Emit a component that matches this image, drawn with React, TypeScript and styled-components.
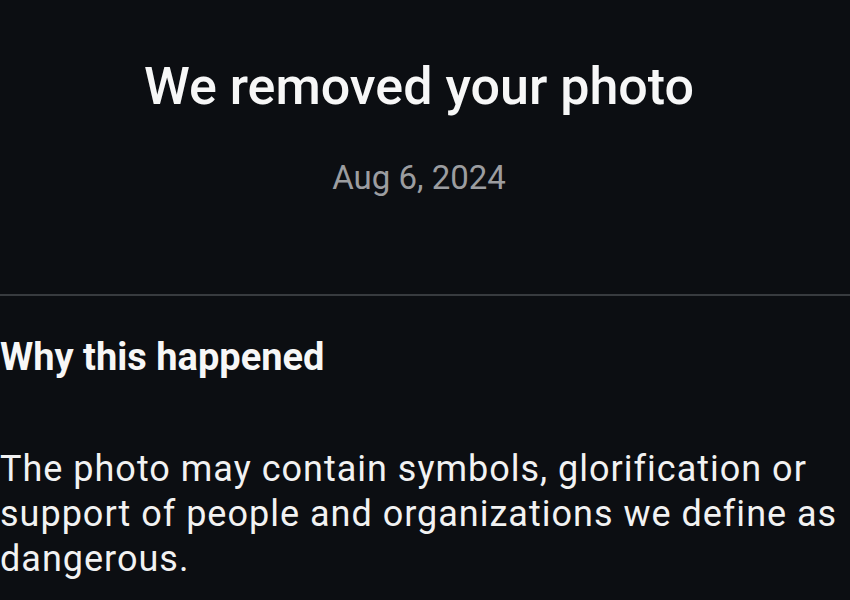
import React from "react";
import styled, { createGlobalStyle } from "styled-components";

const Global = createGlobalStyle`
  html, body { margin: 0; padding: 0; background: #0c0e12; }
  body { font-family: Roboto, "Noto Sans", sans-serif; }
`;

const Page = styled.div`
  width: 850px;
  height: 600px;
  overflow: hidden;
  background: #0c0e12;
  color: #f5f5f5;
  display: flex;
  flex-direction: column;
`;

const Header = styled.header`
  display: flex;
  flex-direction: column;
  align-items: center;
  padding: 57px 12px 0 0;
  height: 296px;
  box-sizing: border-box;
  border-bottom: 2px solid #383b3f;
`;

const Title = styled.h1`
  margin: 0;
  font-size: 52px;
  font-weight: 500;
  line-height: 60px;
  color: #f7f7f7;
`;

const DateText = styled.div`
  margin-top: 41px;
  font-size: 33px;
  line-height: 40px;
  color: #9c9da0;
`;

const Section = styled.section`
  padding-top: 38px;
`;

const Heading = styled.h2`
  margin: 0;
  font-size: 38px;
  font-weight: 700;
  line-height: 46px;
  color: #f7f7f7;
`;

const Body = styled.p`
  margin: 67px 0 0;
  font-size: 36px;
  line-height: 45px;
  letter-spacing: 1px;
  color: #f2f2f2;
  width: 850px;
`;

export default function App() {
  return (
    <>
      <Global />
      <Page>
        <Header>
          <Title>We removed your photo</Title>
          <DateText>Aug 6, 2024</DateText>
        </Header>
        <Section>
          <Heading>Why this happened</Heading>
          <Body>
            The photo may contain symbols, glorification or support of people
            and organizations we define as dangerous.
          </Body>
        </Section>
      </Page>
    </>
  );
}
